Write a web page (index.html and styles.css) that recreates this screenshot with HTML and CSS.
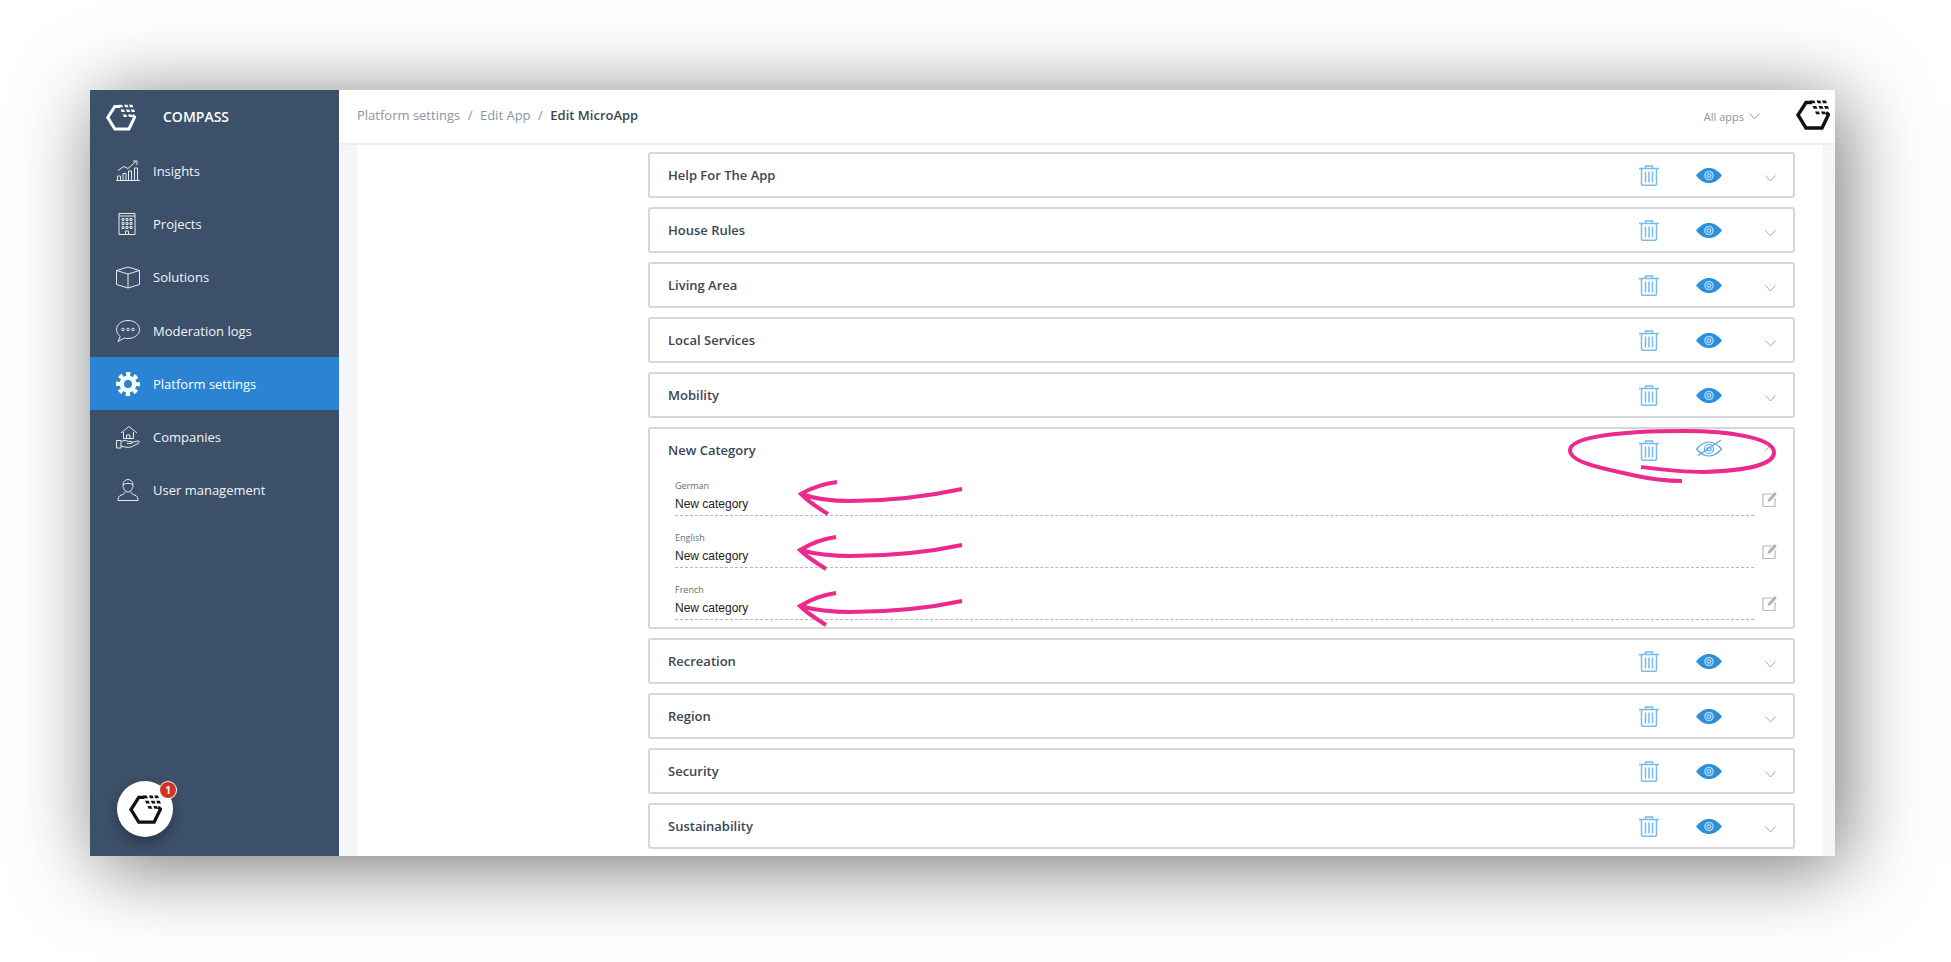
FILE: index.html
```html
<!DOCTYPE html>
<html lang="en">
<head>
    <meta charset="UTF-8">
    <title>Edit MicroApp</title>
    <link rel="stylesheet" href="styles.css">
</head>
<body>
<!-- shared icons -->
<svg class="icon-defs" width="0" height="0">
    <defs>
        <symbol id="i-logo" viewBox="0 0 34 30">
            <path d="M16 2.500H10L2 15l8 13h16l6.500-13.500-2.500-2" fill="none" stroke="currentColor" stroke-width="3.400"/>
            <path fill="currentColor" d="M14.500 0.500h3.800l1.200 2.800h-3.800zM20.500 0.500h3.800l1.200 2.800h-3.800zM26 0.500h3.800l1.200 2.800h-3.800zM16.500 6h3.800l1.200 2.800h-3.800zM22.500 6h3.800l1.200 2.800h-3.800zM28 6h3.800l1.200 2.800h-3.800zM19 11.500h3.800l1.200 2.800h-3.800zM25 11.500h3.800l1.200 2.800h-3.800z"/>
        </symbol>
        <symbol id="i-trash" viewBox="0 0 20 21">
            <g fill="none" stroke="#78bbec" stroke-width="1.500">
                <path d="M0 3.500h20M6.500 3.200V1h7v2.200M2.500 3.500v15.500q0 1.300 1.300 1.300h12.400q1.300 0 1.300-1.300V3.500"/>
                <path d="M6.500 6.500v11M10 6.500v11M13.500 6.500v11"/>
            </g>
        </symbol>
        <symbol id="i-eye" viewBox="0 0 26 15">
            <path fill="#2b8fd9" d="M0 7.500C4 2.500 8 0 13 0s9 2.500 13 7.500c-4 5-8 7.500-13 7.500S4 12.500 0 7.500z"/>
            <circle cx="13" cy="7.500" r="4.800" fill="#a9d4f3"/>
            <circle cx="13" cy="7.500" r="3" fill="none" stroke="#2b8fd9" stroke-width="1"/>
            <circle cx="13" cy="7.500" r="1" fill="#2b8fd9"/>
        </symbol>
        <symbol id="i-eye-off" viewBox="0 0 26 18">
            <g fill="none" stroke="#55a7e4" stroke-width="1.200">
                <path d="M0.500 10C4.500 5.500 8.500 3 13 3s8.500 2.500 12.500 7c-4 4.500-8 7-12.500 7S4.500 14.500 0.500 10z"/>
                <circle cx="13" cy="10" r="4.500"/>
                <circle cx="13" cy="10" r="2"/>
                <path d="M2 16.500L25 1"/>
            </g>
        </symbol>
        <symbol id="i-chevron" viewBox="0 0 11 7">
            <path d="M0.500 0.500L5.500 6l5-5.500" fill="none" stroke="currentColor" stroke-width="1"/>
        </symbol>
        <symbol id="i-edit" viewBox="0 0 16 16">
            <path d="M10 3H1v12.500h12V7" fill="none" stroke="#b6bbc0" stroke-width="1.200"/>
            <path d="M5.500 11l.8-3L12.500 1l2.300 2-6.300 7z" fill="#aeb3b8"/>
        </symbol>
    </defs>
</svg>

<div class="window">
    <aside class="sidebar">
        <div class="brand">
            <svg class="brand-logo"><use href="#i-logo"/></svg>
            <span class="brand-name">COMPASS</span>
        </div>
        <nav>
            <a class="nav-item">
                <svg class="nav-icon" viewBox="0 0 24 24"><path d="M0 21.500h24M1.500 21v-4h3v4M7 21v-6.500h3V21M12.500 21v-9h3v9M18.500 21V9h3v12M2 11.500l6-4 4 2 8-7M17 2h4v4"/></svg>
                Insights
            </a>
            <a class="nav-item">
                <svg class="nav-icon" viewBox="0 0 24 24"><path d="M3 1.500h16v21H3zM3 4h16M6 6.500h2v2H6zM10 6.500h2v2h-2zM14 6.500h2v2h-2zM6 10.500h2v2H6zM10 10.500h2v2h-2zM14 10.500h2v2h-2zM6 14.500h2v2H6zM10 14.500h2v2h-2zM14 14.500h2v2h-2zM9.500 22.500v-3.500h3v3.500"/></svg>
                Projects
            </a>
            <a class="nav-item">
                <svg class="nav-icon" viewBox="0 0 24 24"><path d="M0.500 5.500L12 2l11.500 3.500v14L12 23 0.500 19.500zM0.500 5.500L12 9l11.500-3.500M12 9v14"/></svg>
                Solutions
            </a>
            <a class="nav-item">
                <svg class="nav-icon" viewBox="0 0 24 24"><path d="M12 1.500c6.300 0 11.500 4 11.500 9s-5.200 9-11.500 9c-1.300 0-2.500-.2-3.700-.5L2 22.500l2.200-5C2 15.800.5 13.300.5 10.500c0-5 5.200-9 11.500-9z"/><circle cx="7" cy="10.500" r="1.300"/><circle cx="12" cy="10.500" r="1.300"/><circle cx="17" cy="10.500" r="1.300"/></svg>
                Moderation logs
            </a>
            <a class="nav-item active">
                <svg class="nav-icon gear" viewBox="0 0 24 24"><circle cx="12" cy="12" r="6.300" stroke-width="4.600"/><circle cx="12" cy="12" r="10" stroke-width="4" stroke-dasharray="4.300 3.550" stroke-dashoffset="2.150"/></svg>
                Platform settings
            </a>
            <a class="nav-item">
                <svg class="nav-icon" viewBox="0 0 24 24"><path d="M5 8l8-6.500L21 8M7.500 7v6.500h10V7M10.500 13.500V10h3.500v3.500M0.500 15.500h4.500V23H0.500zM5 16.500c3-1.500 5-1 7.500 0h2.500c1.500 0 1.500 2 0 2h-4M15 17.500l7-1.500c1.800 0 1.800 1.500.5 2.300L15 22c-3 .7-6.500 0-10-.8"/></svg>
                Companies
            </a>
            <a class="nav-item">
                <svg class="nav-icon" viewBox="0 0 24 24"><path d="M7 7c0-3.300 2.200-5.500 5-5.500s5 2.200 5 5.500-2.200 7-5 7-5-3.700-5-7zM7.200 6.500c3-1.500 6.500-1.500 9.600 0M9 13.500c0 2-1.500 2.800-4 3.700-2 .7-3 2-3 5.300h20c0-3.300-1-4.600-3-5.300-2.500-.9-4-1.700-4-3.700"/></svg>
                User management
            </a>
        </nav>
        <!-- chat bubble -->
        <div class="chat">
            <svg class="chat-logo"><use href="#i-logo"/></svg>
            <span class="chat-badge">1</span>
        </div>
    </aside>

    <div class="main">
        <header class="topbar">
            <div class="crumbs">
                <span>Platform settings</span><i>/</i><span>Edit App</span><i>/</i><b>Edit MicroApp</b>
            </div>
            <div class="app-select">All apps <svg class="app-chevron"><use href="#i-chevron"/></svg></div>
            <svg class="top-logo"><use href="#i-logo"/></svg>
        </header>

        <div class="body-wrap">
            <div class="list">
                <div class="card">
                    <div class="card-head">
                        <span class="card-title">Help For The App</span>
                        <svg class="ic-trash"><use href="#i-trash"/></svg>
                        <svg class="ic-eye"><use href="#i-eye"/></svg>
                        <svg class="ic-chevron"><use href="#i-chevron"/></svg>
                    </div>
                </div>
                <div class="card">
                    <div class="card-head">
                        <span class="card-title">House Rules</span>
                        <svg class="ic-trash"><use href="#i-trash"/></svg>
                        <svg class="ic-eye"><use href="#i-eye"/></svg>
                        <svg class="ic-chevron"><use href="#i-chevron"/></svg>
                    </div>
                </div>
                <div class="card">
                    <div class="card-head">
                        <span class="card-title">Living Area</span>
                        <svg class="ic-trash"><use href="#i-trash"/></svg>
                        <svg class="ic-eye"><use href="#i-eye"/></svg>
                        <svg class="ic-chevron"><use href="#i-chevron"/></svg>
                    </div>
                </div>
                <div class="card">
                    <div class="card-head">
                        <span class="card-title">Local Services</span>
                        <svg class="ic-trash"><use href="#i-trash"/></svg>
                        <svg class="ic-eye"><use href="#i-eye"/></svg>
                        <svg class="ic-chevron"><use href="#i-chevron"/></svg>
                    </div>
                </div>
                <div class="card">
                    <div class="card-head">
                        <span class="card-title">Mobility</span>
                        <svg class="ic-trash"><use href="#i-trash"/></svg>
                        <svg class="ic-eye"><use href="#i-eye"/></svg>
                        <svg class="ic-chevron"><use href="#i-chevron"/></svg>
                    </div>
                </div>

                <!-- opened category -->
                <div class="card open">
                    <div class="card-head">
                        <span class="card-title">New Category</span>
                        <svg class="ic-trash"><use href="#i-trash"/></svg>
                        <svg class="ic-eye off"><use href="#i-eye-off"/></svg>
                        <svg class="ic-chevron up"><use href="#i-chevron"/></svg>
                    </div>
                    <div class="fields">
                        <div class="field-row">
                            <div class="field">
                                <div class="field-label">German</div>
                                <div class="field-value">New category</div>
                            </div>
                            <svg class="ic-edit"><use href="#i-edit"/></svg>
                        </div>
                        <div class="field-row">
                            <div class="field">
                                <div class="field-label">English</div>
                                <div class="field-value">New category</div>
                            </div>
                            <svg class="ic-edit"><use href="#i-edit"/></svg>
                        </div>
                        <div class="field-row">
                            <div class="field">
                                <div class="field-label">French</div>
                                <div class="field-value">New category</div>
                            </div>
                            <svg class="ic-edit"><use href="#i-edit"/></svg>
                        </div>
                    </div>
                </div>

                <div class="card">
                    <div class="card-head">
                        <span class="card-title">Recreation</span>
                        <svg class="ic-trash"><use href="#i-trash"/></svg>
                        <svg class="ic-eye"><use href="#i-eye"/></svg>
                        <svg class="ic-chevron"><use href="#i-chevron"/></svg>
                    </div>
                </div>
                <div class="card">
                    <div class="card-head">
                        <span class="card-title">Region</span>
                        <svg class="ic-trash"><use href="#i-trash"/></svg>
                        <svg class="ic-eye"><use href="#i-eye"/></svg>
                        <svg class="ic-chevron"><use href="#i-chevron"/></svg>
                    </div>
                </div>
                <div class="card">
                    <div class="card-head">
                        <span class="card-title">Security</span>
                        <svg class="ic-trash"><use href="#i-trash"/></svg>
                        <svg class="ic-eye"><use href="#i-eye"/></svg>
                        <svg class="ic-chevron"><use href="#i-chevron"/></svg>
                    </div>
                </div>
                <div class="card">
                    <div class="card-head">
                        <span class="card-title">Sustainability</span>
                        <svg class="ic-trash"><use href="#i-trash"/></svg>
                        <svg class="ic-eye"><use href="#i-eye"/></svg>
                        <svg class="ic-chevron"><use href="#i-chevron"/></svg>
                    </div>
                </div>
            </div>
        </div>
    </div>
</div>

<!-- pink marker notes drawn on top of the screenshot -->
<svg class="marks" viewBox="0 0 1951 962">
    <path d="M1641 467C1665 470 1680 472 1703 472C1740 471 1773 466 1774 453C1775 438 1730 431 1683 431C1625 431 1571 436 1570 450C1569 463 1610 470 1632 475C1650 479 1665 481 1682 481"/>
    <path d="M962 489C920 498 880 501 850 501C830 501 815 499 801 494M837 482C822 484 811 488 801 494C809 502 818 508 828 514"/>
    <path d="M962 545C920 554 880 556 850 556C830 556 815 554 800 550M836 537C821 539 810 544 800 550C808 558 817 563 826 569"/>
    <path d="M962 601C920 610 880 612 850 612C830 612 815 610 800 606M836 593C821 595 810 600 800 606C808 614 817 619 826 625"/>
</svg>
</body>
</html>
```

FILE: styles.css
```css
* {
    box-sizing: border-box;
}
body {
    margin: 0;
    padding: 90px 116px 106px 90px;
    height: 962px;
    background: #fff;
    font-family: "Open Sans", sans-serif;
    overflow: hidden;
}
.icon-defs {
    position: absolute;
}
.window {
    display: flex;
    width: 1745px;
    height: 766px;
    background: #fff;
    box-shadow: 8px 10px 75px rgba(0, 0, 0, 0.55);
}

/* sidebar */
.sidebar {
    position: relative;
    width: 249px;
    flex: none;
    background: #3c5069;
    color: #fff;
}
.brand {
    display: flex;
    align-items: center;
    height: 54px;
    padding-left: 16px;
}
.brand-logo {
    width: 30px;
    height: 27px;
    color: #fff;
}
.brand-name {
    margin: 0 0 2px 27px;
    font-size: 14px;
    font-weight: 600;
}
.nav-item {
    display: flex;
    align-items: center;
    gap: 13px;
    height: 53.3px;
    padding-left: 26px;
    font-size: 13px;
    color: #f2f5f8;
}
.nav-item.active {
    background: #2a84d2;
    color: #fff;
}
.nav-icon {
    width: 24px;
    height: 24px;
    fill: none;
    stroke: #e6ebf0;
    stroke-width: 1;
}
.nav-icon.gear {
    stroke: #fff;
}
.chat {
    position: absolute;
    left: 27px;
    bottom: 19px;
    display: flex;
    align-items: center;
    justify-content: center;
    width: 56px;
    height: 56px;
    border-radius: 50%;
    background: #fff;
    box-shadow: 0 6px 14px rgba(0, 0, 0, 0.3);
}
.chat-logo {
    width: 33px;
    height: 29px;
    color: #111;
}
.chat-badge {
    position: absolute;
    top: 1px;
    right: -3px;
    width: 16px;
    height: 16px;
    border-radius: 50%;
    background: #d2321e;
    box-shadow: 0 0 0 1px #fff;
    color: #fff;
    font-size: 10px;
    font-weight: 700;
    line-height: 16px;
    text-align: center;
}

/* top bar */
.main {
    flex: 1;
    display: flex;
    flex-direction: column;
    min-width: 0;
}
.topbar {
    display: flex;
    align-items: center;
    height: 55px;
    padding: 0 5px 4px 18px;
    border-bottom: 2px solid #eceeef;
}
.crumbs {
    flex: 1;
    font-size: 13px;
    color: #8e959c;
}
.crumbs i {
    margin: 0 7.500px;
    font-style: normal;
}
.crumbs b {
    font-weight: 600;
    color: #3a4654;
}
.app-select {
    display: flex;
    align-items: center;
    gap: 5px;
    margin: 3px 36px 0 0;
    font-size: 11px;
    color: #8e959c;
}
.app-chevron {
    width: 11px;
    height: 7px;
    color: #9aa2a8;
}
.top-logo {
    width: 34px;
    height: 30px;
    color: #111;
}

/* list of categories */
.body-wrap {
    flex: 1;
    margin: 0 12px 0 18px;
    background: #fff;
    box-shadow: -18px 0 0 #f4f5f7, 12px 0 0 #f4f5f7;
    overflow: hidden;
}
.list {
    display: flex;
    flex-direction: column;
    gap: 9px;
    width: 1147px;
    margin: 7px 0 0 291px;
}
.card {
    flex: none;
    border: 2px solid #d4d7db;
    border-radius: 3px;
    background: #fff;
}
.card-head {
    display: flex;
    align-items: center;
    height: 42px;
    padding: 0 17px 0 18px;
}
.card-title {
    flex: 1;
    font-size: 13px;
    font-weight: 600;
    color: #3d4652;
}
.ic-trash {
    width: 20px;
    height: 21px;
}
.ic-eye {
    width: 26px;
    height: 15px;
    margin: 0 43px 0 37px;
}
.ic-eye.off {
    height: 18px;
    margin-top: -4px;
}
.ic-chevron {
    width: 11px;
    height: 7px;
    margin-top: 6px;
    color: #a3a9ad;
}
.ic-chevron.up {
    transform: rotate(180deg);
    margin-top: -6px;
}

/* language fields in the opened card */
.fields {
    display: flex;
    flex-direction: column;
    gap: 10px;
    padding: 3px 15px 7px 25px;
}
.field-row {
    display: flex;
    gap: 8px;
}
.field {
    flex: 1;
    height: 42px;
    padding-top: 6px;
    border-bottom: 1px dashed #b4b8bb;
}
.field-label {
    font-size: 9px;
    line-height: 12px;
    color: #6d6a70;
}
.field-value {
    margin-top: 4px;
    font-family: "Liberation Sans", sans-serif;
    font-size: 12px;
    line-height: 16px;
    color: #222;
}
.ic-edit {
    width: 16px;
    height: 16px;
    flex: none;
    margin-top: 17px;
}

/* annotations */
.marks {
    position: absolute;
    top: 0;
    left: 0;
    width: 1951px;
    height: 962px;
    fill: none;
    stroke: #ec2a8c;
    stroke-width: 4;
    stroke-linecap: butt;
    pointer-events: none;
}
```
